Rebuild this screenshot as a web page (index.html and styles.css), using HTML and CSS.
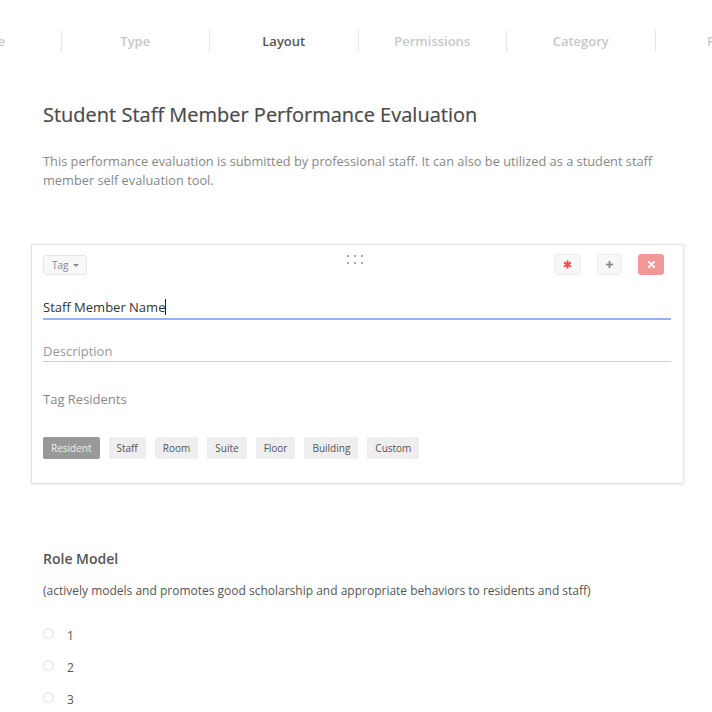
FILE: index.html
```html
<!DOCTYPE html>
<html>
<head>
<meta charset="utf-8">
<link rel="stylesheet" href="styles.css">
</head>
<body>
<div class="page">
  <nav class="tabs">
    <div class="tab">Name</div>
    <div class="tab">Type</div>
    <div class="tab active">Layout</div>
    <div class="tab">Permissions</div>
    <div class="tab">Category</div>
    <div class="tab">Review</div>
  </nav>

  <main class="content">
    <section class="intro">
      <h1 class="title">Student Staff Member Performance Evaluation</h1>
      <p class="desc">This performance evaluation is submitted by professional staff. It can also be utilized as a student staff member self evaluation tool.</p>
    </section>

    <section class="card">
      <div class="card-top">
        <div class="top-left">
          <button class="tag-btn">Tag <span class="caret"></span></button>
        </div>
        <div class="handle">
          <span></span><span></span><span></span><span></span><span></span><span></span>
        </div>
        <div class="actions">
          <button class="act req"><svg width="9" height="9" viewBox="0 0 10 10"><g stroke="#ff4d4d" stroke-width="2.2"><line x1="5" y1="0.5" x2="5" y2="9.5"/><line x1="1.1" y1="2.75" x2="8.9" y2="7.25"/><line x1="1.1" y1="7.25" x2="8.9" y2="2.75"/></g></svg></button>
          <button class="act add"><svg width="9" height="9" viewBox="0 0 10 10"><g stroke="#888" stroke-width="2"><line x1="5" y1="1" x2="5" y2="9"/><line x1="1" y1="5" x2="9" y2="5"/></g></svg></button>
          <button class="act del"><svg width="9" height="9" viewBox="0 0 10 10"><g stroke="#fff" stroke-width="2.2"><line x1="1.5" y1="1.5" x2="8.5" y2="8.5"/><line x1="8.5" y1="1.5" x2="1.5" y2="8.5"/></g></svg></button>
        </div>
      </div>
      <div class="field focused"><span class="val">Staff Member Name</span><span class="cursor"></span></div>
      <div class="field plain"><span class="ph">Description</span></div>
      <div class="tag-label">Tag Residents</div>
      <div class="chips">
        <span class="chip on">Resident</span>
        <span class="chip">Staff</span>
        <span class="chip">Room</span>
        <span class="chip">Suite</span>
        <span class="chip">Floor</span>
        <span class="chip">Building</span>
        <span class="chip">Custom</span>
      </div>
    </section>

    <section class="question">
      <h2 class="q-title">Role Model</h2>
      <p class="q-sub">(actively models and promotes good scholarship and appropriate behaviors to residents and staff)</p>
      <ul class="options">
        <li><span class="radio"></span><span>1</span></li>
        <li><span class="radio"></span><span>2</span></li>
        <li><span class="radio"></span><span>3</span></li>
      </ul>
    </section>
  </main>
</div>
</body>
</html>
```

FILE: styles.css
```css
* { box-sizing: border-box; }
html, body { margin: 0; padding: 0; background: #fff; overflow: hidden; }
body { font-family: "Open Sans", "Noto Sans", sans-serif; color: #555; width: 712px; height: 712px; }

.page { width: 712px; overflow: hidden; }

.tabs {
  display: flex;
  margin-left: -88px;
  padding-top: 30px;
  width: 900px;
}
.tab {
  flex: 0 0 148.5px;
  height: 22px;
  line-height: 22px;
  text-align: center;
  font-size: 13px;
  font-weight: 600;
  color: #c8c8c8;
  border-left: 1px solid #e6e6e6;
}
.tab:first-child { border-left: none; }
.tab.active { color: #555; }

.content { padding: 0 28px 0 31px; }

.intro { padding: 0 12px; margin-top: 50px; }
.title {
  margin: 0;
  font-size: 20px;
  font-weight: 400;
  color: #4a4a4a;
  line-height: 26px;
  -webkit-text-stroke: 0.2px #4a4a4a;
}
.desc {
  margin: 24px 0 0;
  font-size: 12.8px;
  line-height: 19px;
  color: #888;
}

.card {
  margin-top: 54px;
  border: 1px solid #e3e3e3;
  box-shadow: 0 1px 3px rgba(0,0,0,0.08);
  padding: 9px 12px 24px 11px;
  background: #fff;
}
.card-top {
  display: grid;
  grid-template-columns: 1fr auto 1fr;
  align-items: start;
  height: 32px;
}
.top-left { display: flex; }
.tag-btn {
  margin-top: 1px;
  width: 44px;
  height: 20px;
  padding: 0 0 0 8px;
  text-align: left;
  font-family: inherit;
  font-size: 10px;
  color: #888;
  background: #f8f8f8;
  border: 1px solid #e6e6e6;
  border-radius: 3px;
}
.caret {
  display: inline-block;
  width: 0; height: 0;
  border-left: 3px solid transparent;
  border-right: 3px solid transparent;
  border-top: 3px solid #888;
  vertical-align: middle;
  margin-left: 2px;
  margin-top: -2px;
}
.handle {
  display: grid;
  grid-template-columns: repeat(3, 2px);
  column-gap: 5px;
  row-gap: 5px;
  margin-top: 1px;
  margin-left: -5px;
}
.handle span { width: 2px; height: 2px; background: #aaa; }
.actions { display: flex; justify-content: flex-end; margin-right: 7px; }
.act {
  display: flex; align-items: center; justify-content: center;
  height: 21px;
  padding: 0;
  border-radius: 3px;
  background: #f8f8f8;
  border: 1px solid #ececec;
}
.act.req { width: 27px; }
.act.add { width: 25px; margin-left: 16px; }
.act.del { width: 26px; margin-left: 16px; background: #f09898; border-color: #f09898; }

.field {
  display: flex;
  align-items: flex-end;
  font-size: 13px;
  line-height: 18px;
}
.field.focused {
  margin-top: 4px;
  height: 30px;
  padding-bottom: 2px;
  border-bottom: 2px solid #8cb5f2;
  color: #333;
}
.field.plain {
  margin-top: 13px;
  height: 29px;
  padding-bottom: 1px;
  border-bottom: 1px solid #cfcfcf;
}
.field .ph { color: #999; }
.cursor { display: inline-block; width: 1px; height: 16px; background: #222; margin-bottom: 1px; }

.tag-label {
  margin-top: 28px;
  font-size: 13px;
  color: #888;
  line-height: 18px;
}
.chips { display: flex; gap: 9px; margin-top: 29px; }
.chip {
  height: 22px;
  line-height: 22px;
  padding: 0 8px;
  font-size: 10px;
  color: #555;
  background: #eee;
  border-radius: 2px;
}
.chip.on { background: #999; color: #eee; }

.question { padding: 0 12px; margin-top: 65px; }
.q-title { margin: 0; font-size: 14px; font-weight: 600; color: #555; line-height: 20px; }
.q-sub { margin: 13px 0 0; font-size: 12px; color: #555; line-height: 18px; }
.options { list-style: none; margin: 19px 0 0; padding: 0; }
.options li {
  display: flex; align-items: center;
  height: 32px;
  font-size: 12px;
  color: #555;
}
.radio {
  width: 11px; height: 11px;
  border: 1px solid #ddd;
  border-radius: 50%;
  margin-right: 13px;
  margin-top: -3px;
}
```
